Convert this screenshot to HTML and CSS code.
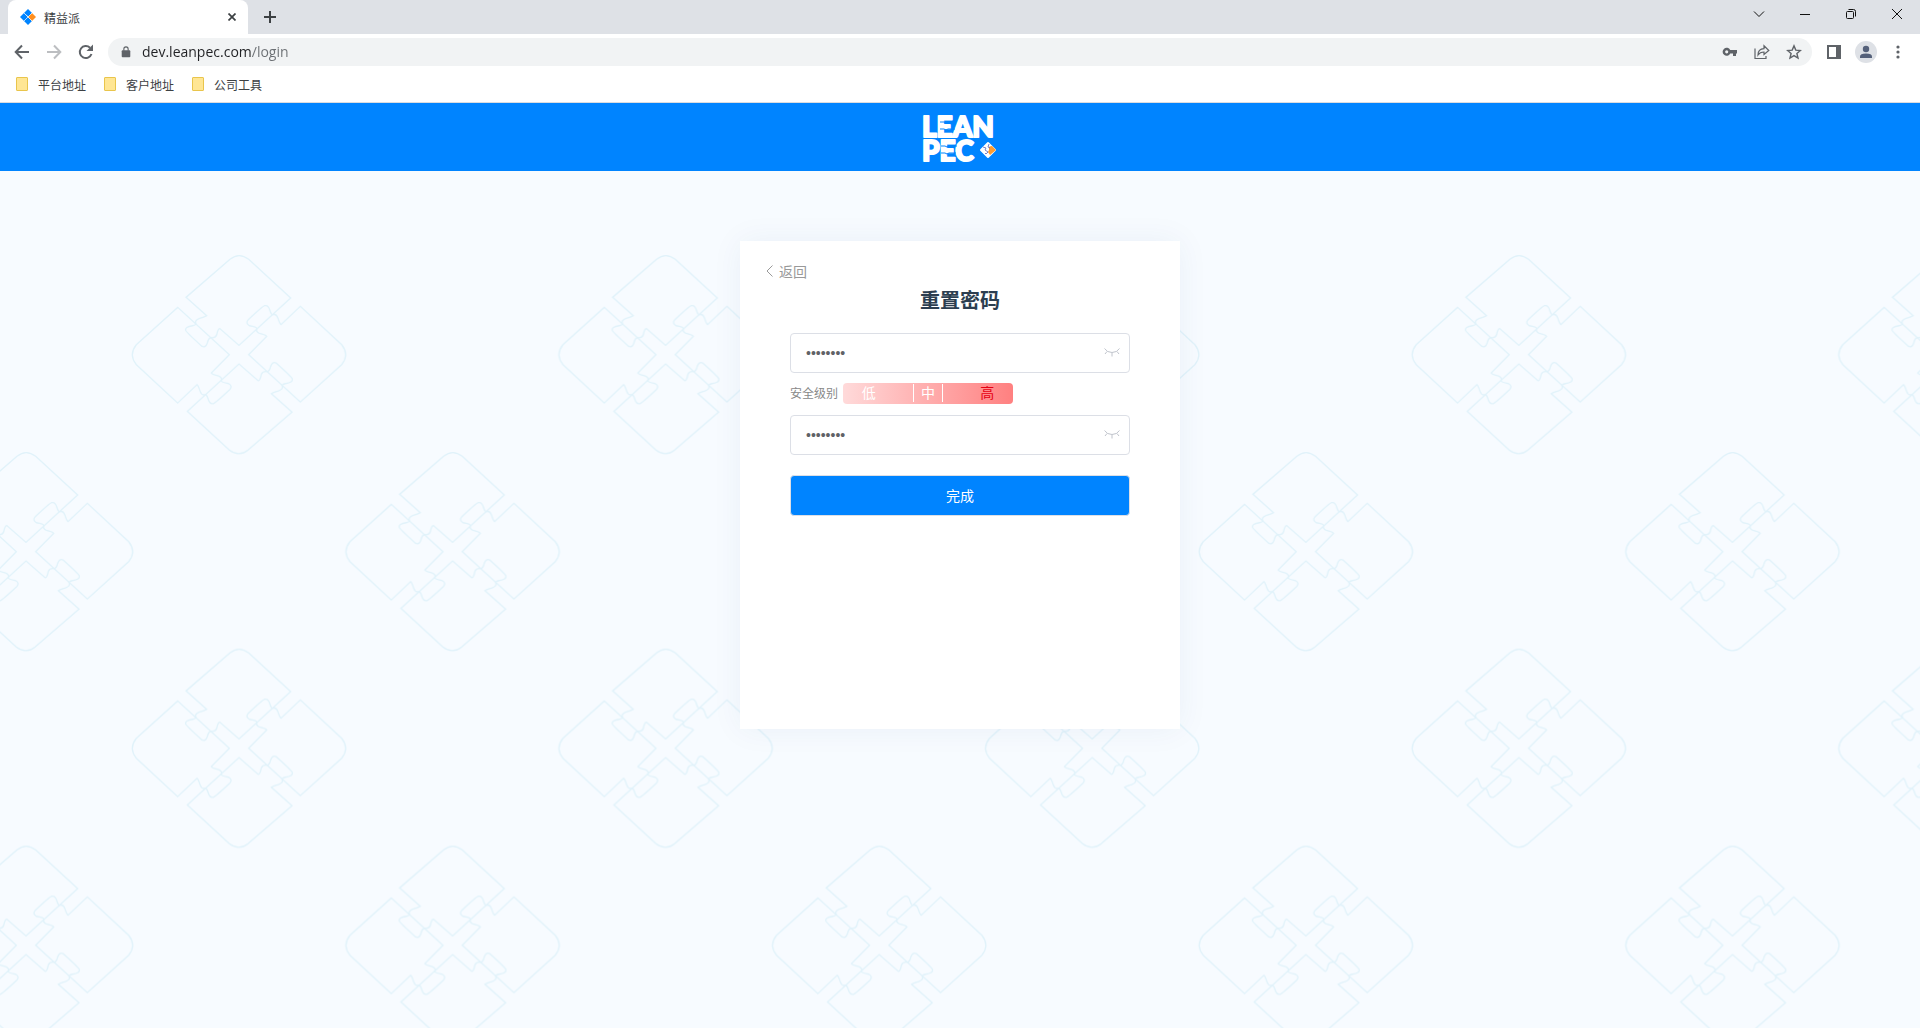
FILE: index.html
```
<!DOCTYPE html>
<html lang="zh-CN">
<head>
    <meta charset="utf-8">
    <title>精益派</title>
    <link rel="stylesheet" href="styles.css">
</head>
<body>
<div class="browser">
    <div class="tab-bar">
        <div class="tab">
            <svg class="favicon" width="16" height="16" viewBox="0 0 16 16">
                <path fill="#0084ff" d="M8 0l4 4-3 4-5-4zM4 4l4 4-4 4-4-4zM8 8l4 4-4 4-4-4z"/>
                <path fill="#ff8f1f" d="M12 4l4 4-4 4-4-4z"/>
                <path stroke="#fff" stroke-width=".7" fill="none" d="M3.5 3.5l9 9M12.5 3.5l-9 9"/>
            </svg>
            <span class="tab-title">精益派</span>
            <button class="tab-close" aria-label="关闭标签页">
                <svg width="8" height="8" viewBox="0 0 8 8"><path d="M.5.5l7 7M7.5.5l-7 7" stroke="#3c4043" stroke-width="1.7"/></svg>
            </button>
        </div>
        <button class="new-tab" aria-label="新标签页">
            <svg width="12" height="12" viewBox="0 0 12 12"><path d="M6 0v12M0 6h12" stroke="#3c4043" stroke-width="2"/></svg>
        </button>
        <div class="window-btns">
            <button aria-label="搜索标签页"><svg width="12" height="12" viewBox="0 0 12 12"><path d="M1 3.5l5 5 5-5"/></svg></button>
            <button aria-label="最小化"><svg width="12" height="12" viewBox="0 0 12 12"><path d="M1 6.5h10"/></svg></button>
            <button aria-label="还原"><svg width="12" height="12" viewBox="0 0 12 12"><rect x="1.500" y="3.500" width="7" height="7" rx="1"/><path d="M3.500 1.500h5q2 0 2 2v5"/></svg></button>
            <button aria-label="关闭"><svg width="12" height="12" viewBox="0 0 12 12"><path d="M1 1l10 10M11 1L1 11"/></svg></button>
        </div>
    </div>
    <div class="toolbar">
        <button class="tool" aria-label="后退">
            <svg width="16" height="16" viewBox="0 0 16 16"><path d="M15 8H2M8 1.500L1.700 8 8 14.500" fill="none" stroke="#5f6368" stroke-width="2"/></svg>
        </button>
        <button class="tool" aria-label="前进" disabled>
            <svg width="16" height="16" viewBox="0 0 16 16"><path d="M1 8h13M8 1.500L14.300 8 8 14.500" fill="none" stroke="#bcbec1" stroke-width="2"/></svg>
        </button>
        <button class="tool" aria-label="重新加载">
            <svg width="16" height="16" viewBox="0 0 16 16"><path d="M13.500 10A6 6 0 1 1 12 3.700" fill="none" stroke="#5f6368" stroke-width="2"/><path d="M15 .5V7H8.500z" fill="#5f6368"/></svg>
        </button>
        <div class="address">
            <svg width="10" height="12" viewBox="0 0 10 14"><path fill="#5f6368" d="M1 5h8q1 0 1 1v6q0 1-1 1H1q-1 0-1-1V6q0-1 1-1z"/><path d="M2.500 5.500V3.500a2.500 2.500 0 0 1 5 0v2" fill="none" stroke="#5f6368" stroke-width="1.300"/></svg>
            <input class="url" type="text" value="dev.leanpec.com/login" aria-label="地址栏">
            <button class="tool" aria-label="密码">
                <svg width="16" height="16" viewBox="0 0 16 16"><path fill="#5f6368" fill-rule="evenodd" d="M8.200 6a4 4 0 1 0 0 3.500h2.800v2.500h3V9.500h1V6zM4.700 6.200a1.600 1.600 0 1 1 0 3.200 1.600 1.600 0 0 1 0-3.200z"/></svg>
            </button>
            <button class="tool" aria-label="分享">
                <svg width="16" height="16" viewBox="0 0 16 16"><path fill="none" stroke="#5f6368" stroke-width="1.200" d="M1 4.500v10h11V12M4 11q0-6 6-6.300V1.800L14.800 6.500 10 10.500V8Q6 8 4 11z"/></svg>
            </button>
            <button class="tool" aria-label="收藏">
                <svg width="16" height="16" viewBox="0 0 16 16"><path fill="none" stroke="#5f6368" stroke-width="1.400" d="M8 1.900l1.800 4.200 4.600.4-3.500 3 1.100 4.500L8 11.600 4 14l1.100-4.500-3.500-3 4.600-.4z"/></svg>
            </button>
        </div>
        <button class="tool" aria-label="侧边栏">
            <svg width="14" height="14" viewBox="0 0 14 14"><path fill="#5f6368" fill-rule="evenodd" d="M0 0h14v14H0zM2 2v10h7V2z"/></svg>
        </button>
        <button class="tool" aria-label="用户">
            <svg width="22" height="22" viewBox="0 0 22 22"><circle cx="11" cy="11" r="11" fill="#dee1e6"/><circle cx="11" cy="8" r="3.200" fill="#55617a"/><path fill="#55617a" d="M5 17v-1.500q0-3 6-3t6 3V17z"/></svg>
        </button>
        <button class="tool" aria-label="更多">
            <svg width="4" height="14" viewBox="0 0 4 14" fill="#5f6368"><circle cx="2" cy="2" r="1.600"/><circle cx="2" cy="7" r="1.600"/><circle cx="2" cy="12" r="1.600"/></svg>
        </button>
    </div>
    <nav class="bookmarks">
        <a href="#"><span class="folder"></span>平台地址</a>
        <a href="#"><span class="folder"></span>客户地址</a>
        <a href="#"><span class="folder"></span>公司工具</a>
    </nav>
</div>

<header class="header">
    <svg class="logo" width="76" height="68" viewBox="0 0 76 68">
        <text x="0" y="34">LEAN</text>
        <text x="0" y="58">PEC</text>
        <g class="wave">
            <path d="M18 19h4q2 2 4 0h8M18 26h4q2 2 4 0h7M19 43h4q2 2 4 0h8M19 50h4q2 2 4 0h7"/>
        </g>
        <path d="M66 40l7 7-7 7-7-7z" fill="#fff" stroke="#fff" stroke-width="2" stroke-linejoin="round"/>
        <path d="M67 44q3-2 4 0l3 3-6 5-2-3 1-2z" fill="#ff9c2e"/>
        <path d="M61 44l3 1-1 2 3 2M67 41l-1 3 2 1M66 49l-2 2-1-1" fill="none" stroke="#5a62b8" stroke-width=".8"/>
    </svg>
</header>

<main class="main">
    <svg class="pattern" width="100%" height="100%" aria-hidden="true">
        <defs>
            <g id="half">
                <path d="M330 42L198 156l62 55q-4 3-21 8-14 5-12 13 3 7-9 9-24 4-21 14 2 6 49 48 11 5 16-10 3-14 10-16 14 2 18-8 4-21 10-19l57 50 155-142L386 42Q357 20 330 42z"/>
                <path d="M541 183l-58 55q-4-3-9-19-5-14-14-11-6 2-10-12-5-18-16-15-6 2-50 43-8 10 4 17 22 4 22 8-3 11 8 15 18 4 22 9l-54 55 155 142L665 358q24-30 0-60z"/>
            </g>
            <g id="puzzle">
                <use href="#half"/>
                <use href="#half" transform="rotate(180 357 328)"/>
            </g>
            <pattern id="odd" width="1280" height="1181" patternUnits="userSpaceOnUse" patternTransform="translate(120 81) scale(.3333)">
                <use href="#puzzle" y="-20"/>
            </pattern>
            <pattern id="even" width="1280" height="1181" patternUnits="userSpaceOnUse" patternTransform="translate(-93 278) scale(.3333)">
                <use href="#puzzle" y="-20"/>
            </pattern>
        </defs>
        <rect y="81" width="100%" height="100%" fill="url(#odd)" stroke="none"/>
        <rect y="278" width="100%" height="100%" fill="url(#even)" stroke="none"/>
    </svg>
    <form class="card">
        <a class="back" href="#">
            <svg width="8" height="12" viewBox="0 0 8 12"><path d="M6.500.5L1 6l5.500 5.500" fill="none" stroke="#999"/></svg>
            返回
        </a>
        <h1>重置密码</h1>
        <div class="field">
            <input type="password" value="12345678" aria-label="新密码">
            <button class="eye" type="button" aria-label="显示密码">
                <svg width="16" height="9" viewBox="0 0 16 9"><path d="M.5.5Q3 4.500 8 4.500T15.500.5M8 5v3.500M3 3.500L1 6M13 3.500L15 6"/></svg>
            </button>
        </div>
        <div class="level">
            <span>安全级别</span>
            <div class="level-bar">
                <span>低</span>
                <span class="mid">中</span>
                <span class="on">高</span>
            </div>
        </div>
        <div class="field">
            <input type="password" value="12345678" aria-label="确认密码">
            <button class="eye" type="button" aria-label="显示密码">
                <svg width="16" height="9" viewBox="0 0 16 9"><path d="M.5.5Q3 4.500 8 4.500T15.500.5M8 5v3.500M3 3.500L1 6M13 3.500L15 6"/></svg>
            </button>
        </div>
        <button class="submit" type="button">完成</button>
    </form>
</main>
</body>
</html>
```
FILE: styles.css
```
* {
    box-sizing: border-box;
    margin: 0;
    padding: 0;
}
body {
    display: flex;
    flex-direction: column;
    min-height: 100vh;
    font-family: "Liberation Sans", "Noto Sans CJK SC", sans-serif;
    font-size: 14px;
}
button {
    border: 0;
    background: none;
    font: inherit;
}
a {
    text-decoration: none;
}

/* 浏览器 */
.browser {
    background: #fff;
    border-bottom: 1px solid #dadce0;
    font-size: 12px;
    color: #3c4043;
}
.tab-bar {
    display: flex;
    height: 34px;
    padding-left: 8px;
    background: #dee1e6;
}
.tab {
    display: flex;
    align-items: center;
    width: 240px;
    padding: 0 12px;
    background: #fff;
    border-radius: 8px 8px 0 0;
}
.tab-title {
    flex: 1;
    padding-left: 8px;
}
.tab-close {
    display: flex;
}
.new-tab {
    display: flex;
    align-items: center;
    padding: 0 16px;
}
.window-btns {
    display: flex;
    margin-left: auto;
}
.window-btns button {
    display: flex;
    align-items: center;
    justify-content: center;
    width: 46px;
    height: 28px;
}
.window-btns svg {
    fill: none;
    stroke: #111;
}
.toolbar {
    display: flex;
    align-items: center;
    padding: 4px 6px;
}
.tool {
    display: flex;
    align-items: center;
    justify-content: center;
    width: 32px;
    height: 28px;
}
.address {
    display: flex;
    flex: 1;
    align-items: center;
    height: 28px;
    margin: 0 6px;
    padding: 0 2px 0 13px;
    background: #f1f3f4;
    border-radius: 14px;
}
/* 域名深色，路径浅色 */
.url {
    flex: 1;
    height: 28px;
    margin-left: 11px;
    padding-bottom: 2px;
    border: 0;
    outline: 0;
    background: linear-gradient(to right, #202124 109px, #6b6f73 109px);
    -webkit-background-clip: text;
    background-clip: text;
    color: transparent;
    font-family: "Open Sans", sans-serif;
    font-size: 14px;
}
.bookmarks {
    display: flex;
    gap: 18px;
    height: 32px;
    padding: 0 16px 4px;
}
.bookmarks a {
    display: flex;
    align-items: center;
    gap: 10px;
    color: #3c4043;
}
.folder {
    width: 12px;
    height: 14px;
    background: #ffe694;
    border: 1px solid #e9c54c;
    border-radius: 1px;
}

/* 页面 */
.header {
    display: flex;
    align-items: center;
    justify-content: center;
    height: 68px;
    background: #0084ff;
}
.logo {
    overflow: visible;
}
.logo text {
    fill: #fff;
    stroke: #fff;
    stroke-width: 2px;
    stroke-linejoin: round;
    font-family: Lato, sans-serif;
    font-size: 28px;
    font-weight: 900;
}
.wave {
    fill: none;
    stroke: #0084ff;
}
.main {
    position: relative;
    flex: 1;
    padding: 70px 0;
    background: #f7fbff;
}
.pattern {
    position: absolute;
    top: 0;
    left: 0;
    fill: none;
    stroke: #e0f2fa;
    stroke-width: 4px;
}
.card {
    position: relative;
    width: 440px;
    min-height: 488px;
    margin: 0 auto;
    padding: 20px 50px;
    background: #fff;
    box-shadow: 0 0 30px rgba(0, 60, 120, .06);
}
.back {
    display: flex;
    align-items: center;
    gap: 5px;
    height: 20px;
    margin-left: -24px;
    color: #999;
}
h1 {
    margin-bottom: 12px;
    line-height: 40px;
    text-align: center;
    font-size: 20px;
    color: #2c3e50;
}
.field {
    display: flex;
    align-items: center;
    height: 40px;
    border: 1px solid #dcdfe6;
    border-radius: 4px;
}
.field input {
    flex: 1;
    height: 38px;
    padding-left: 15px;
    border: 0;
    outline: 0;
    background: none;
    font-family: "Liberation Sans", sans-serif;
    font-size: 14px;
    color: #606266;
}
.eye {
    padding: 0 9px 2px 8px;
}
.eye svg {
    display: block;
    fill: none;
    stroke: #c0c4cc;
}
.level {
    display: flex;
    align-items: center;
    gap: 5px;
    margin: 10px 0 11px;
    font-size: 12px;
    line-height: 18px;
    color: #888;
}
.level-bar {
    display: flex;
    align-items: center;
    justify-content: space-around;
    width: 170px;
    height: 21px;
    padding-bottom: 1px;
    background: linear-gradient(to right, #ffdada, #ff8080);
    border-radius: 4px;
    font-size: 14px;
    color: #fff;
}
.mid {
    padding: 0 7px;
    border: solid #fff;
    border-width: 0 1px;
}
.on {
    color: #e60012;
}
.submit {
    width: 100%;
    height: 41px;
    margin-top: 20px;
    padding-bottom: 2px;
    background: #0084ff;
    border: 1px solid #dcdfe6;
    border-radius: 4px;
    color: #fff;
}
```
